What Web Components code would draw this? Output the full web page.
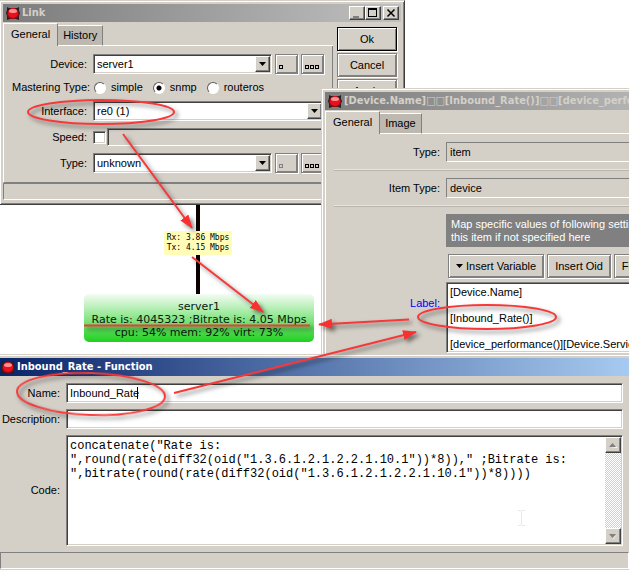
<!DOCTYPE html>
<html lang="en">
<head>
<meta charset="utf-8">
<title>Inbound_Rate - Function</title>
<style>
	html, body {
		height: 100%;
		margin: 0;
	}

	body {
		background: #fff;
		overflow: hidden;
		font: 11px/13px "Liberation Sans", Arial, sans-serif;
		color: #000;
	}
</style>
</head>
<body>

<map-desktop>
	<link-line></link-line>
	<rate-label>
		<div>Rx: 3.86 Mbps</div>
		<div>Tx: 4.15 Mbps</div>
	</rate-label>
	<device-node>
		<div>server1</div>
		<div>Rate is: 4045323 ;Bitrate is: 4.05 Mbps</div>
		<div>cpu: 54% mem: 92% virt: 73%</div>
	</device-node>

	<app-window id="link" heading="Link" controls>
		<dialog-body>
			<tab-panel tabs="General,History">
				<combo-row label="Device:" value="server1">
					<push-button small dots="1" name="Up"></push-button>
					<push-button small dots="3" name="Browse"></push-button>
				</combo-row>
				<radio-row label="Mastering Type:" options="simple,snmp,routeros" value="snmp"></radio-row>
				<combo-row label="Interface:" value="re0 (1)"></combo-row>
				<speed-row label="Speed:"></speed-row>
				<combo-row label="Type:" value="unknown">
					<push-button small dots="1" name="Up" disabled></push-button>
					<push-button small dots="3" name="Browse"></push-button>
				</combo-row>
			</tab-panel>
			<push-button slot="actions" primary>Ok</push-button>
			<push-button slot="actions">Cancel</push-button>
			<push-button slot="actions">Apply</push-button>
		</dialog-body>
		<status-bar></status-bar>
	</app-window>

	<app-window id="item" heading="[Device.Name]□□[Inbound_Rate()]□□[device_performance()]">
		<tab-panel tabs="General,Image">
			<text-row label="Type:" value="item" readonly></text-row>
			<etched-line></etched-line>
			<text-row label="Item Type:" value="device" readonly></text-row>
			<etched-line></etched-line>
			<note-box>Map specific values of following settings<br>this item if not specified here</note-box>
			<memo-row label="Label:" linked>
				<push-button slot="tools" arrow>Insert Variable</push-button>
				<push-button slot="tools">Insert Oid</push-button>
				<push-button slot="tools">Function</push-button>
				[Device.Name]||[Inbound_Rate()]||[device_performance()][Device.ServicesDown]
			</memo-row>
		</tab-panel>
	</app-window>

	<app-window id="function" heading="Inbound_Rate - Function" active>
		<form-body>
			<text-row label="Name:" value="Inbound_Rate"></text-row>
			<text-row label="Description:" value=""></text-row>
			<memo-row label="Code:" code>
				concatenate("Rate is:|",round(rate(diff32(oid("1.3.6.1.2.1.2.2.1.10.1"))*8))," ;Bitrate is:|",bitrate(round(rate(diff32(oid("1.3.6.1.2.1.2.2.1.10.1"))*8))))
			</memo-row>
		</form-body>
		<status-bar></status-bar>
	</app-window>

	<red-marks></red-marks>
</map-desktop>

<script>
	// Styles shared by every control that has a label in front of it
	const rowStyle = `
		* { box-sizing: border-box; }
		:host {
			display: grid;
			grid-template-columns: var(--label-width) minmax(0, 1fr);
			column-gap: 6px;
			align-items: center;
			min-height: 20px;
		}
		.label { text-align: right; white-space: nowrap; }
		input, select, textarea { font: inherit; color: inherit; margin: 0; outline: none; border-radius: 0; }
		.sunken {
			border: 1px solid;
			border-color: #808080 #fff #fff #808080;
			box-shadow: inset 1px 1px #404040, inset -1px -1px #d4d0c8;
			background: #fff;
		}
		input[type=text] { display: block; width: 100%; height: 20px; padding: 0 3px; }
	`;

	const render = (host, html) => {
		const template = document.createElement("template");
		template.innerHTML = html;
		host.attachShadow({ mode: "open" }).appendChild(template.content.cloneNode(true));
	};

	class MapDesktop extends HTMLElement {
		connectedCallback() {
			render(this, `
			<style>
				:host { display: block; position: relative; height: 100%; overflow: hidden; background: #fff; }
				::slotted(*) { position: absolute; }
				::slotted(link-line) { left: 196px; top: 200px; height: 95px; }
				::slotted(rate-label) { left: 164px; top: 231px; }
				::slotted(device-node) { left: 84px; top: 294px; }
				::slotted(#link) { left: -1px; top: 0; width: 406px; height: 205px; --label-width: 75px; }
				::slotted(#item) { left: 321px; right: -80px; top: 88px; height: 280px; --label-width: 106px; --row-gap: 7px; }
				::slotted(#function) { left: -4px; right: -4px; top: 354px; bottom: -4px; --label-width: 60px; }
				::slotted(red-marks) { inset: 0; }
			</style>
			<slot></slot>`);
		}
	}

	class LinkLine extends HTMLElement {
		connectedCallback() {
			render(this, `<style>:host { display: block; width: 4px; background: #0c0000; }</style>`);
		}
	}

	class RateLabel extends HTMLElement {
		connectedCallback() {
			render(this, `
			<style>
				:host {
					display: block;
					box-sizing: border-box;
					width: 68px;
					padding: 2px;
					border-radius: 2px;
					background: #fffdb8;
					font: 8px/10px "DejaVu Sans Mono", monospace;
					text-align: center;
					white-space: nowrap;
				}
			</style>
			<slot></slot>`);
		}
	}

	class DeviceNode extends HTMLElement {
		connectedCallback() {
			render(this, `
			<style>
				:host {
					display: block;
					box-sizing: border-box;
					width: 230px;
					height: 48px;
					padding-top: 6px;
					border-radius: 5px;
					background: linear-gradient(#f4fcf4, #20d020);
					font: 11px/13px "DejaVu Sans", sans-serif;
					color: #0c200c;
					text-align: center;
					white-space: nowrap;
				}
			</style>
			<slot></slot>`);
		}
	}

	class AppWindow extends HTMLElement {
		connectedCallback() {
			const controls = `
			<div class="controls">
				<button aria-label="Minimize"><svg width="14" height="12"><path d="M3 9h6v2h-6z" fill="#808080"/></svg></button>
				<button aria-label="Maximize"><svg width="14" height="12"><path d="M2 1h9v9h-9zM3 3v6h7v-6z" fill="#000" fill-rule="evenodd"/></svg></button>
				<button aria-label="Close"><svg width="14" height="12"><path d="M3.500 2.500l7 7M10.500 2.500l-7 7" stroke="#000" stroke-width="1.500"/></svg></button>
			</div>`;
			render(this, `
			<style>
				* { box-sizing: border-box; }
				:host {
					display: flex;
					flex-direction: column;
					box-sizing: border-box;
					border: 1px solid;
					border-color: #d4d0c8 #404040 #404040 #d4d0c8;
					box-shadow: inset 1px 1px #fff, inset -1px -1px #808080;
					padding: 3px;
					background: #d4d0c8;
				}
				header {
					display: flex;
					align-items: center;
					flex: none;
					height: 18px;
					padding: 0 2px 0 3px;
					gap: 2px;
					background: linear-gradient(90deg, #7c7c7c, #c0c0c0);
					color: #d4d0c8;
				}
				:host([active]) header { background: linear-gradient(90deg, #0a246a, #a6caf0); color: #fff; padding-left: 1px; }
				h1 {
					flex: 1;
					margin: 0;
					font: bold 11px/16px "DejaVu Sans Condensed", "DejaVu Sans", Tahoma, sans-serif;
					white-space: nowrap;
					overflow: hidden;
				}
				.icon { flex: none; }
				.controls { display: flex; }
				.controls button {
					width: 16px;
					height: 14px;
					padding: 0;
					border: 1px solid;
					border-color: #fff #404040 #404040 #fff;
					box-shadow: inset -1px -1px #808080;
					background: #d4d0c8;
				}
				.controls button:last-child { margin-left: 2px; }
				.controls svg { display: block; }
			</style>
			<header>
				<svg class="icon" width="14" height="15" viewBox="0 0 14 15">
					<path d="M1 1l2 1h8l2-1v4l1 2-1 3v4l-3-1H4l-3 1v-4L0 7l1-3z" fill="#222"/>
					<rect x="1" y="3" width="12" height="10" rx="5" fill="#a00810"/>
					<rect x="2" y="2" width="10" height="10" rx="5" fill="#e8101c"/>
					<ellipse cx="7" cy="5" rx="4" ry="2" fill="#ff8c90"/>
				</svg>
				<h1>${this.getAttribute("heading")}</h1>
				${this.hasAttribute("controls") ? controls : ""}
			</header>
			<slot></slot>`);
		}
	}

	class DialogBody extends HTMLElement {
		connectedCallback() {
			render(this, `
			<style>
				:host { display: grid; grid-template-columns: minmax(0, 1fr) 60px; gap: 4px; flex: 1; min-height: 0; padding-right: 4px; }
				.actions { display: flex; flex-direction: column; gap: 2px; padding-top: 5px; }
			</style>
			<slot></slot>
			<div class="actions"><slot name="actions"></slot></div>`);
		}
	}

	class FormBody extends HTMLElement {
		connectedCallback() {
			render(this, `
			<style>
				:host { display: flex; flex-direction: column; gap: 6px; flex: 1; min-height: 0; padding: 7px 6px 6px 0; }
				::slotted(memo-row) { flex: 1; }
			</style>
			<slot></slot>`);
		}
	}

	class TabPanel extends HTMLElement {
		connectedCallback() {
			const tabs = this.getAttribute("tabs").split(",");
			render(this, `
			<style>
				* { box-sizing: border-box; }
				:host { display: flex; flex-direction: column; flex: 1; min-height: 0; }
				nav { display: flex; align-items: flex-end; height: 24px; flex: none; }
				nav::after { content: ""; flex: 1; border-bottom: 1px solid #fff; }
				button {
					font: inherit;
					color: inherit;
					height: 21px;
					padding: 0 5px;
					border: 1px solid;
					border-color: #fff #808080 #fff #fff;
					border-left: 0;
					background: #bdb8b0;
				}
				button.on {
					height: 23px;
					padding: 0 7px 2px;
					border-left: 1px solid #fff;
					border-bottom: 0;
					background: #d4d0c8;
				}
				section {
					flex: 1;
					display: flex;
					flex-direction: column;
					gap: var(--row-gap, 6px);
					padding: 8px 8px 7px 8px;
					border: 1px solid;
					border-color: transparent #808080 #808080 #fff;
					border-top: 0;
				}
			</style>
			<nav>${tabs.map((tab, i) => `<button class="${i ? "" : "on"}">${tab}</button>`).join("")}</nav>
			<section><slot></slot></section>`);
		}
	}

	class PushButton extends HTMLElement {
		connectedCallback() {
			const dots = Number(this.getAttribute("dots"));
			let face = "<slot></slot>";
			if (dots) {
				const ink = this.hasAttribute("disabled") ? "#808080" : "#000";
				face = `<svg width="17" height="14">${Array.from({ length: dots }, (_, i) =>
					`<path d="M${1 + i * 5} 8h4v4h-4zM${2 + i * 5} 9v2h2v-2z" fill="${ink}" fill-rule="evenodd"/>`).join("")}</svg>`;
			}
			if (this.hasAttribute("arrow")) {
				face = `<svg width="7" height="9"><path d="M0 3h7l-3.500 4z"/></svg>&nbsp;` + face;
			}
			render(this, `
			<style>
				:host { display: block; flex: none; }
				button {
					display: block;
					box-sizing: border-box;
					width: 100%;
					height: 24px;
					padding: 0 7px;
					font: inherit;
					color: inherit;
					white-space: nowrap;
					border: 1px solid #808080;
					box-shadow: inset 1px 1px #fff, inset -1px -1px #808080, 1px 1px #fff;
					background: #d4d0c8;
				}
				:host([primary]) button { border-color: #000; }
				:host([small]) button { width: 23px; height: 20px; padding: 0 2px; }
				:host([small]) svg { display: block; }
			</style>
			<button ${dots ? `aria-label="${this.getAttribute("name")}"` : ""}>${face}</button>`);
		}
	}

	class TextRow extends HTMLElement {
		connectedCallback() {
			render(this, `
			<style>
				${rowStyle}
				:host([readonly]) input { background: #d4d0c8; box-shadow: none; }
			</style>
			<label class="label" for="field">${this.getAttribute("label")}</label>
			<input class="sunken" id="field" type="text" value="${this.getAttribute("value")}" ${this.hasAttribute("readonly") ? "readonly" : ""}>`);
		}
	}

	class ComboRow extends HTMLElement {
		connectedCallback() {
			render(this, `
			<style>
				${rowStyle}
				.line { display: flex; gap: 3px; }
				.combo { flex: 1; display: grid; grid-template-columns: minmax(0, 1fr) 15px; height: 20px; padding: 1px; }
				select { grid-area: 1 / 1 / 2 / 3; appearance: none; border: 0; padding: 0 2px; background: none; }
				.drop {
					grid-area: 1 / 2;
					display: grid;
					place-items: center;
					border: 1px solid;
					border-color: #fff #404040 #404040 #fff;
					box-shadow: inset -1px -1px #808080;
					background: #d4d0c8;
					pointer-events: none;
				}
			</style>
			<label class="label" for="field">${this.getAttribute("label")}</label>
			<div class="line">
				<div class="combo sunken">
					<select id="field"><option>${this.getAttribute("value")}</option></select>
					<span class="drop"><svg width="7" height="4"><path d="M0 0h7l-3.500 4z"/></svg></span>
				</div>
				<slot></slot>
			</div>`);
		}
	}

	class RadioRow extends HTMLElement {
		connectedCallback() {
			const value = this.getAttribute("value");
			const options = this.getAttribute("options").split(",");
			render(this, `
			<style>
				${rowStyle}
				:host { min-height: 15px; }
				.group { display: flex; gap: 10px; padding-left: 1px; }
				.group label { display: flex; align-items: center; gap: 5px; }
				input {
					appearance: none;
					width: 12px;
					height: 12px;
					border: 1px solid;
					border-color: #606060 #fff #fff #606060;
					border-radius: 50%;
					background: #fff;
				}
				input:checked { background: radial-gradient(circle, #000 2px, #fff 3px); }
			</style>
			<span class="label" id="caption">${this.getAttribute("label")}</span>
			<div class="group" role="radiogroup" aria-labelledby="caption">
				${options.map(option => `<label><input type="radio" name="kind" ${option === value ? "checked" : ""}>${option}</label>`).join("")}
			</div>`);
		}
	}

	class SpeedRow extends HTMLElement {
		connectedCallback() {
			render(this, `
			<style>
				${rowStyle}
				.line { display: flex; align-items: center; gap: 1px; }
				input[type=checkbox] { appearance: none; width: 13px; height: 13px; flex: none; }
				input[type=text] { background: #d4d0c8; height: 18px; }
			</style>
			<label class="label" for="use">${this.getAttribute("label")}</label>
			<div class="line">
				<input class="sunken" type="checkbox" id="use">
				<input class="sunken" type="text" aria-label="Speed value" disabled>
			</div>`);
		}
	}

	class MemoRow extends HTMLElement {
		connectedCallback() {
			// A bar in the content stands for a line break
			const text = Array.from(this.childNodes)
				.filter(node => node.nodeType === Node.TEXT_NODE)
				.map(node => node.textContent.trim())
				.join("");
			const code = this.hasAttribute("code");
			render(this, `
			<style>
				${rowStyle}
				:host([linked]) .label { color: #00f; }
				.stack { display: flex; flex-direction: column; gap: 4px; height: 100%; }
				.tools { display: flex; gap: 3px; padding-left: 2px; }
				.memo { display: flex; flex: 1; min-height: 71px; padding: 1px; }
				textarea {
					flex: 1;
					min-width: 0;
					border: 0;
					padding: 2px;
					resize: none;
					overflow: hidden;
					white-space: pre;
					background: none;
				}
				:host([code]) textarea { font: 12px/14px "Liberation Mono", "Courier New", monospace; }
				.scroll {
					display: flex;
					flex-direction: column;
					justify-content: space-between;
					width: 16px;
					background: repeating-conic-gradient(#d4d0c8 0 25%, #fff 0 50%) 0 0 / 2px 2px;
				}
				.scroll button {
					display: grid;
					place-items: center;
					height: 16px;
					padding: 0;
					border: 1px solid;
					border-color: #fff #404040 #404040 #fff;
					box-shadow: inset -1px -1px #808080;
					background: #d4d0c8;
				}
			</style>
			<label class="label" for="field">${this.getAttribute("label")}</label>
			<div class="stack">
				${code ? "" : `<div class="tools"><slot name="tools"></slot></div>`}
				<div class="memo sunken">
					<textarea id="field" spellcheck="false"></textarea>
					${code ? `<div class="scroll">
						<button aria-label="Scroll up"><svg width="8" height="5"><path d="M1 5h7v-1z" fill="#fff"/><path d="M0 4h7l-3.500-4z" fill="#808080"/></svg></button>
						<button aria-label="Scroll down"><svg width="8" height="5"><path d="M8 1l-4 4v-1z" fill="#fff"/><path d="M0 0h7l-3.500 4z" fill="#808080"/></svg></button>
					</div>` : ""}
				</div>
			</div>`);
			this.shadowRoot.getElementById("field").value = text.replaceAll("|", "\n");
		}
	}

	class NoteBox extends HTMLElement {
		connectedCallback() {
			render(this, `
			<style>
				:host {
					display: block;
					margin-left: calc(var(--label-width) + 6px);
					padding: 4px 5px 3px;
					background: #808080;
					color: #fff;
					white-space: nowrap;
				}
			</style>
			<slot></slot>`);
		}
	}

	class EtchedLine extends HTMLElement {
		connectedCallback() {
			render(this, `<style>:host { display: block; border-top: 1px solid #e8e5e0; border-bottom: 1px solid #b8b4ae; }</style>`);
		}
	}

	class StatusBar extends HTMLElement {
		connectedCallback() {
			render(this, `
			<style>
				:host {
					display: block;
					box-sizing: border-box;
					flex: none;
					height: 17px;
					margin-bottom: 1px;
					border: 1px solid;
					border-color: #808080 #fff #fff #808080;
				}
			</style>`);
		}
	}

	// Ellipses and arrows drawn over the windows
	class RedMarks extends HTMLElement {
		connectedCallback() {
			render(this, `
			<style>
				:host { display: block; pointer-events: none; }
				svg { display: block; width: 100%; height: 100%; }
				.marks { fill: none; stroke: #f83838; stroke-width: 2; filter: drop-shadow(3px 3px 2px rgba(0, 0, 0, .5)); }
				#head path { fill: #f83030; stroke: none; }
			</style>
			<svg aria-hidden="true">
				<defs>
					<marker id="head" markerUnits="userSpaceOnUse" markerWidth="14" markerHeight="10" refX="13" refY="5" orient="auto">
						<path d="M0 0l14 5l-14 5z"/>
					</marker>
				</defs>
				<path d="M137.500 387v12" stroke="#000"/>
				<path d="M518 510.500h3M522 510.500h3M521.500 511v14M518 525.500h3M522 525.500h3" stroke="#e8e8e8"/>
				<g class="marks">
					<ellipse cx="101" cy="112" rx="73" ry="12"/>
					<ellipse cx="487" cy="317" rx="69" ry="12"/>
					<ellipse cx="91" cy="394" rx="74" ry="21" transform="rotate(2 91 394)"/>
					<path d="M84 325.500h226"/>
					<path d="M123 134L192 228" marker-end="url(#head)"/>
					<path d="M192 257L263 312" marker-end="url(#head)"/>
					<path d="M409 319.500L319 324.500" marker-end="url(#head)"/>
					<path d="M174 393L416 332" marker-end="url(#head)"/>
				</g>
			</svg>`);
		}
	}

	customElements.define("map-desktop", MapDesktop);
	customElements.define("link-line", LinkLine);
	customElements.define("rate-label", RateLabel);
	customElements.define("device-node", DeviceNode);
	customElements.define("app-window", AppWindow);
	customElements.define("dialog-body", DialogBody);
	customElements.define("form-body", FormBody);
	customElements.define("tab-panel", TabPanel);
	customElements.define("push-button", PushButton);
	customElements.define("text-row", TextRow);
	customElements.define("combo-row", ComboRow);
	customElements.define("radio-row", RadioRow);
	customElements.define("speed-row", SpeedRow);
	customElements.define("memo-row", MemoRow);
	customElements.define("note-box", NoteBox);
	customElements.define("etched-line", EtchedLine);
	customElements.define("status-bar", StatusBar);
	customElements.define("red-marks", RedMarks);
</script>
</body>
</html>
